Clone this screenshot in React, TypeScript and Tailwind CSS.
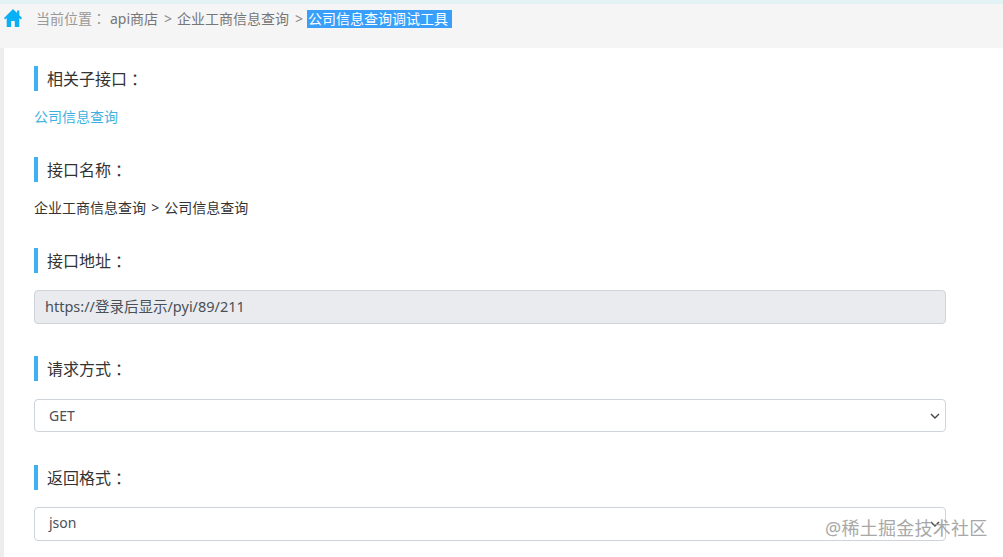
function Colon() {
  return <span className="font-['Noto_Sans_CJK_TC',sans-serif]">：</span>;
}
function Heading({ children, cls }: { children: string; cls: string }) {
  return (
    <div className={`flex items-center h-[25px] border-l-4 border-[#3fb1f3] pl-[9px] text-[16px] text-[#333] ${cls}`}>
      <span>{children}</span>
      <Colon />
    </div>
  );
}
function Chevron({ className }: { className: string }) {
  return (
    <svg viewBox="0 0 10 6" className={className} fill="none" stroke="#444" strokeWidth="1.4">
      <path d="M1 1l4 4 4-4" />
    </svg>
  );
}
export default function App() {
  return (
    <div className="w-[1003px] h-[557px] overflow-hidden bg-[#ededed] text-[14px] font-['Noto_Sans','Noto_Sans_CJK_SC',sans-serif]">
      <div className="h-[4px] bg-[#e3f3f5]" />
      <div className="h-[44px] bg-[#f5f5f5] flex items-start pt-[5px] pl-[4px]">
        <svg viewBox="0 0 20 18" preserveAspectRatio="none" className="w-[18px] h-[18px]" fill="#0ab0f5">
          <path d="M10 0L0 9l1.2 1.4L3 8.900V18h5v-6h4v6h5V8.900l1.800 1.500L20 9l-3-2.700V1.500h-2.500v2.600z" />
        </svg>
        <span className="ml-[14px] text-[#999] leading-[19px]">当前位置<Colon /></span>
        <span className="ml-[4px] text-[#777] leading-[19px]">api商店</span>
        <span className="ml-[6px] text-[#888] leading-[19px]">&gt;</span>
        <span className="ml-[5px] text-[#777] leading-[19px]">企业工商信息查询</span>
        <span className="ml-[6px] text-[#888] leading-[19px]">&gt;</span>
        <span className="ml-[4px] bg-[#3a9ffb] text-white leading-[18px] h-[18px] pl-[1px] mt-[1px] w-[145px]">公司信息查询调试工具</span>
      </div>
      <div className="relative ml-[4px] h-[509px] bg-white pl-[30px] pt-[18px]">
        <Heading cls="">相关子接口</Heading>
        <div className="mt-[16px] text-[#3fb1e0] leading-[20px]">公司信息查询</div>
        <Heading cls="mt-[30px]">接口名称</Heading>
        <div className="mt-[16px] text-[#333] leading-[20px]">
          企业工商信息查询 <span className="mx-[1.5px]">&gt;</span> 公司信息查询
        </div>
        <Heading cls="mt-[30px]">接口地址</Heading>
        <div className="mt-[17px] w-[912px] h-[34px] rounded-[4px] border border-[#ced4da] bg-[#e9ebef] text-[14.5px] text-[#495057] flex items-center pl-[10px]">
          https://登录后显示/pyi/89/211
        </div>
        <Heading cls="mt-[32px]">请求方式</Heading>
        <div className="mt-[18px] w-[912px] h-[33px] rounded-[4px] border border-[#ced4da] bg-white text-[14px] text-[#495057] flex items-center justify-between pl-[14px] pr-[5px]">
          GET
          <Chevron className="w-[10px] h-[6px]" />
        </div>
        <Heading cls="mt-[33px]">返回格式</Heading>
        <div className="mt-[17px] w-[912px] h-[34px] rounded-[4px] border border-[#ced4da] bg-white text-[14px] leading-[30px] text-[#495057] flex items-center justify-between pl-[14px] pr-[5px]">
          <span className="-mt-[2px]">json</span>
          <Chevron className="w-[10px] h-[6px]" />
        </div>
        <div className="absolute left-[821px] top-[470px] text-[18px] tracking-[0.25px] leading-[20px] text-[#a8a8a8]">@稀土掘金技术社区</div>
      </div>
    </div>
  );
}
